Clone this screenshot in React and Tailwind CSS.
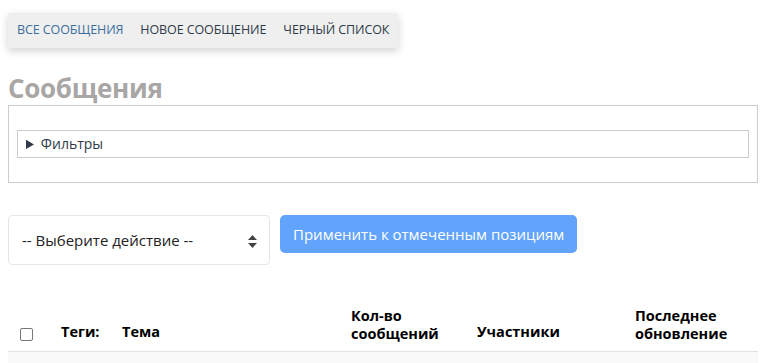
import React from "react";

const font = { fontFamily: '"Open Sans", "Noto Sans", sans-serif' };

const navItems = [
  { label: "Все сообщения", active: true },
  { label: "Новое сообщение" },
  { label: "Черный список" },
];

export default function App() {
  return (
    <div className="bg-white min-h-[363px] pl-2 pr-1 pt-[13px] text-[#222]" style={font}>
      <nav className="inline-flex h-[35px] items-center gap-[17px] bg-[#efefef] pl-[9px] pr-[9px] shadow-[0_3px_8px_rgba(0,0,0,0.18)]">
        {navItems.map((item) => (
          <a
            key={item.label}
            href="#"
            className={`text-[12.5px] uppercase tracking-[-0.1px] ${item.active ? "text-[#3b6e9e]" : "text-[#2e3a48]"}`}
          >
            {item.label}
          </a>
        ))}
      </nav>

      <h1 className="mt-[23px] text-[26px] font-bold leading-[34px] text-[#a9a6a6] tracking-[-0.3px]">Сообщения</h1>

      <div className="h-[78px] border border-[#cccccc] px-2 pt-6">
        <details className="border border-[#cccccc] h-[28px] px-2 text-[14px] leading-[26px] text-[#2e3a48]">
          <summary className="cursor-pointer">Фильтры</summary>
        </details>
      </div>

      <div className="mt-8 flex items-start gap-[10px]">
        <div className="relative flex h-[50px] w-[262px] items-center rounded border border-[#e6e6e6] pl-[13px] text-[15px] text-[#222]">
          -- Выберите действие --
          <svg className="absolute right-[12px] top-[19px]" width="9" height="13" viewBox="0 0 9 13">
            <path d="M4.5 0 L9 5 L0 5 Z" fill="#444" />
            <path d="M4.5 13 L9 8 L0 8 Z" fill="#444" />
          </svg>
        </div>
        <button className="h-[38px] rounded-[5px] bg-[#62a3fb] px-[13px] text-[15px] text-white">
          Применить к отмеченным позициям
        </button>
      </div>

      <table className="mt-[42px] w-full border-collapse text-[14.5px]">
        <thead>
          <tr className="border-b border-[#e2e2e2] align-bottom">
            <th className="w-[40px] pb-[10px] pl-[12px] text-left">
              <span className="block h-[13px] w-[13px] rounded-[2px] border border-[#777]"></span>
            </th>
            <th className="w-[61px] pb-[8px] pl-[13px] text-left font-bold text-black">Теги:</th>
            <th className="w-[242px] pb-[8px] pl-[13px] text-left font-bold text-black">Тема</th>
            <th className="w-[126px] pb-[8px] text-left font-bold leading-[18px] text-black">
              Кол-во<br />сообщений
            </th>
            <th className="w-[158px] pb-[8px] text-left font-bold text-black">Участники</th>
            <th className="pb-[8px] text-left font-bold leading-[18px] text-black">
              Последнее<br />обновление
            </th>
          </tr>
        </thead>
        <tbody>
          <tr className="h-[20px] bg-[#f9f9f9]">
            <td colSpan={6}></td>
          </tr>
        </tbody>
      </table>
    </div>
  );
}
